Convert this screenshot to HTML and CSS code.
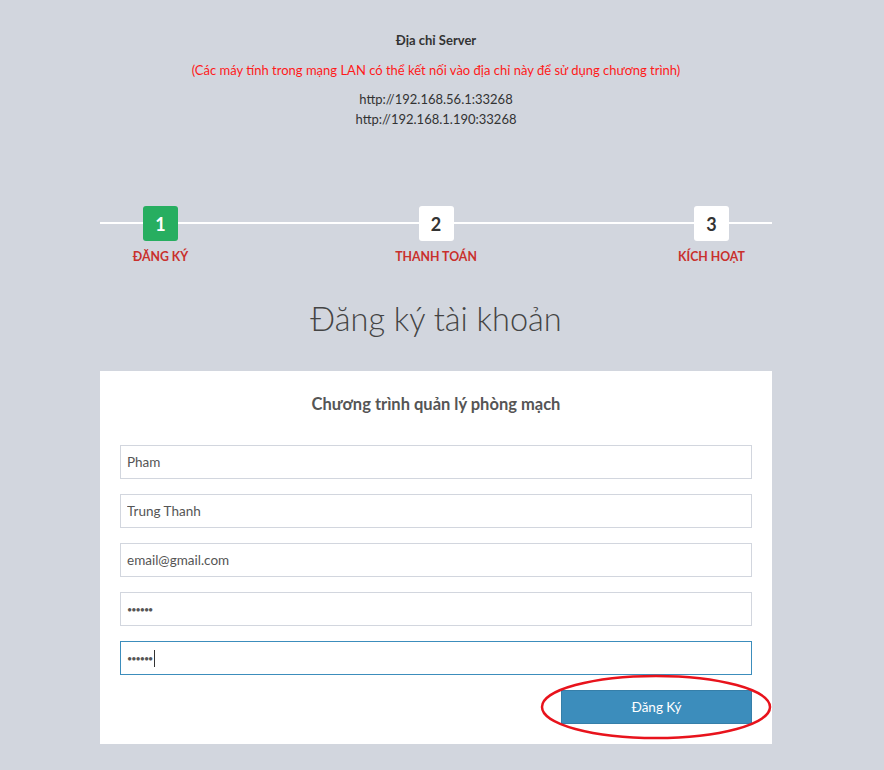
FILE: index.html
```html
<!DOCTYPE html>
<html lang="vi">
<head>
<meta charset="utf-8">
<title>Đăng ký tài khoản</title>
<link rel="stylesheet" href="styles.css">
</head>
<body>
<div class="page">
  <section class="server">
    <div class="server-title">Địa chỉ Server</div>
    <div class="server-note">(Các máy tính trong mạng LAN có thể kết nối vào địa chỉ này để sử dụng chương trình)</div>
    <div class="server-urls">
      <div>http://192.168.56.1:33268</div>
      <div>http://192.168.1.190:33268</div>
    </div>
  </section>

  <section class="steps">
    <div class="steps-line"></div>
    <div class="step">
      <div class="step-box active">1</div>
      <div class="step-label">ĐĂNG KÝ</div>
    </div>
    <div class="step">
      <div class="step-box">2</div>
      <div class="step-label">THANH TOÁN</div>
    </div>
    <div class="step">
      <div class="step-box">3</div>
      <div class="step-label">KÍCH HOẠT</div>
    </div>
  </section>

  <h1 class="title">Đăng ký tài khoản</h1>

  <form class="card">
    <h2 class="card-title">Chương trình quản lý phòng mạch</h2>
    <input class="field" type="text" value="Pham">
    <input class="field" type="text" value="Trung Thanh">
    <input class="field" type="text" value="email@gmail.com">
    <div class="field"><span class="dots">••••••</span></div>
    <div class="field focused"><span class="dots">••••••</span><span class="caret"></span></div>
    <div class="actions">
      <div class="btn-wrap">
        <button type="button" class="btn">Đăng Ký</button>
        <svg class="ring" width="232" height="66" viewBox="0 0 232 66"><ellipse cx="116" cy="33" rx="114" ry="31" fill="none" stroke="#e8131c" stroke-width="2.5"/></svg>
      </div>
    </div>
  </form>
</div>
</body>
</html>
```
FILE: styles.css
```css
* { box-sizing: border-box; }
html, body { margin: 0; padding: 0; }
body {
  background: #d2d6de;
  font-family: Lato, "Open Sans", sans-serif;
  color: #333;
  width: 884px;
  height: 770px;
  overflow: hidden;
}
.page {
  width: 872px;
  padding-top: 31px;
}
.server {
  text-align: center;
  font-size: 13px;
}
.server-title {
  font-weight: 700;
  line-height: 18px;
  color: #333;
}
.server-note {
  color: #ff1a1a;
  margin-top: 12px;
  line-height: 18px;
}
.server-urls {
  margin-top: 10px;
  line-height: 20px;
  color: #333;
}
.steps {
  position: relative;
  margin: 78px 0 0 100px;
  width: 672px;
  height: 70px;
  display: grid;
  grid-template-columns: 121px 1fr 121px;
}
.steps-line {
  position: absolute;
  left: 0;
  right: 0;
  top: 15px;
  height: 2px;
  background: #fff;
}
.step {
  position: relative;
  display: flex;
  flex-direction: column;
  align-items: center;
}
.step-box {
  width: 35px;
  height: 35px;
  background: #fff;
  border-radius: 3px;
  display: flex;
  align-items: center;
  justify-content: center;
  font-weight: 700;
  font-size: 18px;
  color: #333;
  margin-top: -1px;
}
.step-box.active { background: #27ae60; color: #fff; }
.step-label {
  margin-top: 8px;
  font-size: 12.3px;
  font-weight: 700;
  color: #c9302c;
  white-space: nowrap;
}
.title {
  margin: 18px 0 0 0;
  text-align: center;
  font-size: 32.5px;
  font-weight: 300;
  color: #444;
  line-height: 48px;
}
.card {
  margin: 28px 0 0 100px;
  width: 672px;
  background: #fff;
  padding: 20px 20px 20px;
  display: flex;
  flex-direction: column;
  gap: 15px;
}
.card-title {
  margin: 0 0 13px;
  text-align: center;
  font-size: 16.5px;
  font-weight: 700;
  color: #555;
  line-height: 26px;
}
.field {
  display: flex;
  align-items: center;
  width: 100%;
  height: 34px;
  border: 1px solid #d2d6de;
  padding: 0 6px;
  font-family: Lato, "Open Sans", sans-serif;
  font-size: 13.5px;
  color: #555;
  background: #fff;
  outline: none;
}
.field.focused { border-color: #3c8dbc; }
.dots { font-size: 9px; letter-spacing: -1px; color: #555; }
.caret { width: 1px; height: 17px; background: #333; margin-left: 2px; }
.actions {
  display: flex;
  justify-content: flex-end;
}
.btn-wrap { position: relative; }
.btn {
  width: 191px;
  height: 34px;
  border: 1px solid #367fa9;
  background: #3c8dbc;
  color: #fff;
  font-family: Lato, "Open Sans", sans-serif;
  font-size: 13.5px;
  display: block;
}
.ring {
  position: absolute;
  left: -21px;
  top: -16px;
  pointer-events: none;
}
```
